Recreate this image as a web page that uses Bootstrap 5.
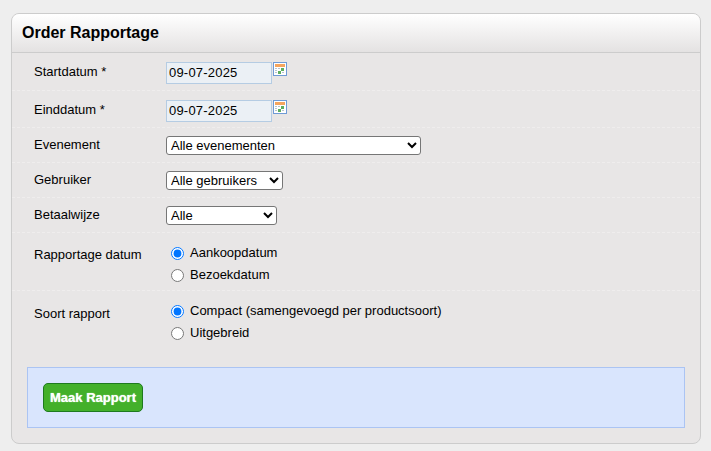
<!DOCTYPE html>
<html lang="nl">
<head>
<meta charset="utf-8">
<title>Order Rapportage</title>
<link href="https://cdn.jsdelivr.net/npm/bootstrap@5.3.0/dist/css/bootstrap.min.css" rel="stylesheet">
<style>
html,body{height:100%}
body{background:#eeeeee;font-family:"Liberation Sans",Arial,sans-serif;font-size:13px;color:#000;padding:13px 10px 7px 11px;overflow:hidden}
.rp-panel{background:#e8e6e6;border:1px solid #cccccc;border-radius:8px;height:431px;display:flex;flex-direction:column}
.rp-head{height:39px;background:linear-gradient(#ffffff,#e4e2e2);border-bottom:1px solid #cccccc;border-radius:7px 7px 0 0;padding:0 10px;display:flex;align-items:center}
.rp-head h1{font-size:16px;font-weight:700;margin:0;line-height:18px}
.rp-row{display:flex;padding-left:22px;border-bottom:1px dashed #efeded}
.rp-row.rp-none{border-bottom:0}
.rp-lab{width:132px;flex:none}
.rp-date{height:38px}.rp-date2{height:37px}.rp-sel{height:35px}.rp-rad1{height:58px}.rp-rad2{height:60px}
.rp-date .rp-lab{padding-top:11px;line-height:16px}
.rp-date input{width:106px;height:22px;border:1px solid #b5cce3;background:#ebf0f5;padding:0 2px 2px;font:13px "Liberation Sans",Arial,sans-serif;color:#000;margin-top:9px;display:block;letter-spacing:.2px}
.rp-ico{margin:9px 0 0 1px;display:block}
.rp-sel .rp-lab{padding-top:9px;line-height:16px}
.rp-sel select{height:19px;font:13px "Liberation Sans",Arial,sans-serif;color:#000;background:#fff;border:1px solid #767676;border-radius:3px;margin-top:8px;display:block}
.rp-rad1 .rp-lab{padding-top:14px;line-height:16px}
.rp-rad2 .rp-lab{padding-top:15px;line-height:16px}
.rp-opts{padding-top:9px}
.rp-opt{display:flex;align-items:center;height:22px;margin:0;padding-left:5px;gap:6px;font-size:13px}
.rp-opt input{width:13px;height:13px;margin:0;accent-color:#0075ff}
.rp-foot{margin:16px 15px 0 15px;height:61px;background:#d9e5fd;border:1px solid #abc4f3;padding:15px}
.rp-btn{width:100px;height:29px;padding:0;background:#43b02a;border:1px solid #1e7a1e;border-radius:5px;color:#fff;font-weight:700;font-size:13px;text-shadow:0 0 1px #e5ffe5}
</style>
</head>
<body>
<div class="rp-panel">
  <div class="rp-head"><h1>Order Rapportage</h1></div>
  <div class="rp-row rp-date">
    <div class="rp-lab">Startdatum *</div>
    <input type="text" value="09-07-2025">
    <svg class="rp-ico" width="14" height="14" viewBox="0 0 14 14"><rect x=".5" y=".5" width="13" height="13" fill="#fff" stroke="#6f9bd6"/><rect x="2" y="2" width="10" height="3" fill="#f5a55f"/><g fill="#b9c4cf"><rect x="2" y="6" width="2" height="1"/><rect x="5" y="6" width="2" height="1"/><rect x="2" y="8" width="2" height="1"/><rect x="2" y="10" width="2" height="1"/><rect x="9" y="10" width="2" height="1"/></g><rect x="8" y="6" width="3" height="3" fill="#5fae5f"/><rect x="5" y="9" width="3" height="3" fill="#5fae5f"/></svg>
  </div>
  <div class="rp-row rp-date rp-date2">
    <div class="rp-lab">Einddatum *</div>
    <input type="text" value="09-07-2025">
    <svg class="rp-ico" width="14" height="14" viewBox="0 0 14 14"><rect x=".5" y=".5" width="13" height="13" fill="#fff" stroke="#6f9bd6"/><rect x="2" y="2" width="10" height="3" fill="#f5a55f"/><g fill="#b9c4cf"><rect x="2" y="6" width="2" height="1"/><rect x="5" y="6" width="2" height="1"/><rect x="2" y="8" width="2" height="1"/><rect x="2" y="10" width="2" height="1"/><rect x="9" y="10" width="2" height="1"/></g><rect x="8" y="6" width="3" height="3" fill="#5fae5f"/><rect x="5" y="9" width="3" height="3" fill="#5fae5f"/></svg>
  </div>
  <div class="rp-row rp-sel">
    <div class="rp-lab">Evenement</div>
    <select style="width:255px"><option>Alle evenementen</option></select>
  </div>
  <div class="rp-row rp-sel">
    <div class="rp-lab">Gebruiker</div>
    <select style="width:117px"><option>Alle gebruikers</option></select>
  </div>
  <div class="rp-row rp-sel">
    <div class="rp-lab">Betaalwijze</div>
    <select style="width:111px"><option>Alle</option></select>
  </div>
  <div class="rp-row rp-rad1">
    <div class="rp-lab">Rapportage datum</div>
    <div class="rp-opts">
      <label class="rp-opt"><input type="radio" name="d" checked>Aankoopdatum</label>
      <label class="rp-opt"><input type="radio" name="d">Bezoekdatum</label>
    </div>
  </div>
  <div class="rp-row rp-rad2 rp-none">
    <div class="rp-lab">Soort rapport</div>
    <div class="rp-opts">
      <label class="rp-opt"><input type="radio" name="s" checked>Compact (samengevoegd per productsoort)</label>
      <label class="rp-opt"><input type="radio" name="s">Uitgebreid</label>
    </div>
  </div>
  <div class="rp-foot"><button type="button" class="btn rp-btn">Maak Rapport</button></div>
</div>
<script src="https://cdn.jsdelivr.net/npm/bootstrap@5.3.0/dist/js/bootstrap.bundle.min.js"></script>
</body>
</html>
